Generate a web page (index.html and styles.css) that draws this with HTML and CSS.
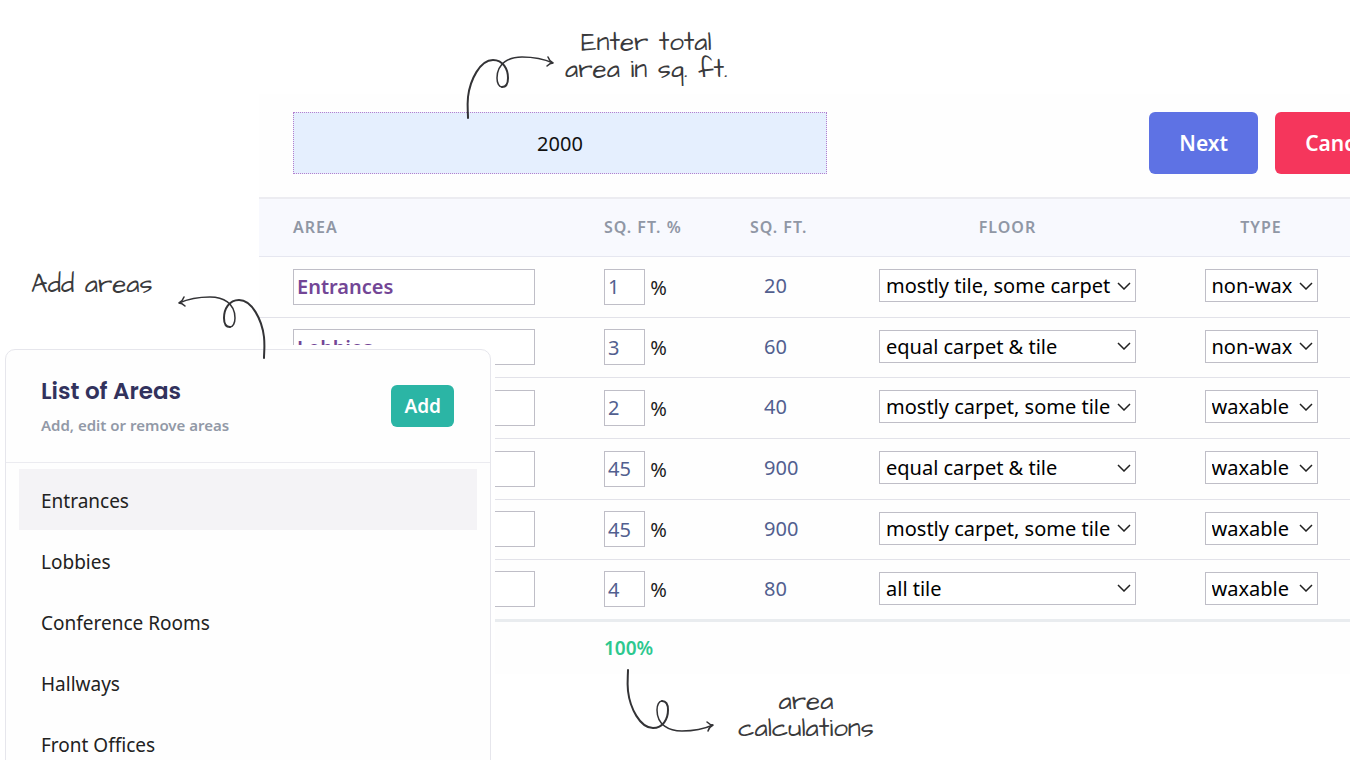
FILE: index.html
```
<!DOCTYPE html>
<html lang="en">
<head>
    <meta charset="utf-8">
    <title>Area Calculator</title>
    <link rel="stylesheet" href="styles.css">
</head>
<body>
    <svg class="defs" aria-hidden="true">
        <symbol id="loop-arrow" viewBox="0 0 100 72">
            <path stroke-width="2" d="M8 68C8 62 7 57 8 47C10 30 20 10 33 10C43 10 48 19 48 28C48 34 46 37 42 37"/>
            <path stroke-width="1.5" d="M42 37C39 37 37 33 37 28C37 13 49 7 62 7C75 7 84 9 93 13"/>
            <path stroke-width="1.5" d="M88 7C89 10 91 12 93 13C91 13 89 14 87 16"/>
        </symbol>
    </svg>

    <main class="panel">
        <form class="toolbar">
            <input class="total-area" type="text" value="2000" aria-label="Total area in sq. ft.">
            <div class="actions">
                <button type="button" class="btn btn-next">Next</button>
                <button type="button" class="btn btn-cancel">Cancel</button>
            </div>
        </form>

        <table class="area-table">
            <colgroup>
                <col class="col-area">
                <col class="col-percent">
                <col class="col-sqft">
                <col class="col-floor">
                <col>
            </colgroup>
            <thead>
                <tr>
                    <th>Area</th>
                    <th>Sq. Ft. %</th>
                    <th>Sq. Ft.</th>
                    <th class="center">Floor</th>
                    <th class="type">Type</th>
                </tr>
            </thead>
            <tbody>
                <tr>
                    <td><input class="name" type="text" value="Entrances" aria-label="Area name"></td>
                    <td><input class="percent" type="text" value="1" aria-label="Percent"> %</td>
                    <td class="sqft">20</td>
                    <td class="center"><select class="floor" aria-label="Floor"><option>mostly tile, some carpet</option></select></td>
                    <td class="type"><select class="wax" aria-label="Type"><option>non-wax</option></select></td>
                </tr>
                <tr>
                    <td><input class="name" type="text" value="Lobbies" aria-label="Area name"></td>
                    <td><input class="percent" type="text" value="3" aria-label="Percent"> %</td>
                    <td class="sqft">60</td>
                    <td class="center"><select class="floor" aria-label="Floor"><option>equal carpet &amp; tile</option></select></td>
                    <td class="type"><select class="wax" aria-label="Type"><option>non-wax</option></select></td>
                </tr>
                <tr>
                    <td><input class="name" type="text" aria-label="Area name"></td>
                    <td><input class="percent" type="text" value="2" aria-label="Percent"> %</td>
                    <td class="sqft">40</td>
                    <td class="center"><select class="floor" aria-label="Floor"><option>mostly carpet, some tile</option></select></td>
                    <td class="type"><select class="wax" aria-label="Type"><option>waxable</option></select></td>
                </tr>
                <tr>
                    <td><input class="name" type="text" aria-label="Area name"></td>
                    <td><input class="percent" type="text" value="45" aria-label="Percent"> %</td>
                    <td class="sqft">900</td>
                    <td class="center"><select class="floor" aria-label="Floor"><option>equal carpet &amp; tile</option></select></td>
                    <td class="type"><select class="wax" aria-label="Type"><option>waxable</option></select></td>
                </tr>
                <tr>
                    <td><input class="name" type="text" aria-label="Area name"></td>
                    <td><input class="percent" type="text" value="45" aria-label="Percent"> %</td>
                    <td class="sqft">900</td>
                    <td class="center"><select class="floor" aria-label="Floor"><option>mostly carpet, some tile</option></select></td>
                    <td class="type"><select class="wax" aria-label="Type"><option>waxable</option></select></td>
                </tr>
                <tr>
                    <td><input class="name" type="text" aria-label="Area name"></td>
                    <td><input class="percent" type="text" value="4" aria-label="Percent"> %</td>
                    <td class="sqft">80</td>
                    <td class="center"><select class="floor" aria-label="Floor"><option>all tile</option></select></td>
                    <td class="type"><select class="wax" aria-label="Type"><option>waxable</option></select></td>
                </tr>
            </tbody>
            <tfoot>
                <tr>
                    <td></td>
                    <td class="total">100%</td>
                    <td colspan="3"></td>
                </tr>
            </tfoot>
        </table>
    </main>

    <section class="card">
        <header class="card-header">
            <div class="card-title">
                <h2>List of Areas</h2>
                <p>Add, edit or remove areas</p>
            </div>
            <button type="button" class="btn-add">Add</button>
        </header>
        <ul class="area-list">
            <li class="active">Entrances</li>
            <li>Lobbies</li>
            <li>Conference Rooms</li>
            <li>Hallways</li>
            <li>Front Offices</li>
        </ul>
    </section>

    <p class="note note-total">Enter total<br>area in sq. ft.</p>
    <svg class="arrow arrow-total"><use href="#loop-arrow"/></svg>
    <p class="note note-add">Add areas</p>
    <svg class="arrow arrow-add"><use href="#loop-arrow"/></svg>
    <p class="note note-calc">area<br>calculations</p>
    <svg class="arrow arrow-calc"><use href="#loop-arrow"/></svg>
</body>
</html>
```
FILE: styles.css
```
* {
    box-sizing: border-box;
}

body {
    margin: 0;
    min-height: 100vh;
    position: relative;
    overflow: hidden;
    background-color: #fff;
    color: #222;
    font-family: "Noto Sans", sans-serif;
    font-size: 20px;
}

input,
select,
button {
    font-family: inherit;
    font-size: 20px;
}

.defs {
    position: absolute;
    width: 0;
    height: 0;
}

/* main panel, runs off the right edge */
.panel {
    margin: 94px -87px 0 259px;
    background-color: #fefefe;
}

.toolbar {
    display: flex;
    justify-content: space-between;
    padding: 18px 34px 23px;
}

.total-area {
    width: 534px;
    height: 62px;
    border: 1px dotted #b47fce;
    background-color: #e5effe;
    color: #111;
    text-align: center;
}

.actions {
    display: flex;
    gap: 17px;
}

.btn {
    height: 62px;
    padding: 0 30px;
    border: none;
    border-radius: 6px;
    color: #fff;
    font-size: 21px;
    font-weight: 600;
}

.btn-next {
    background-color: #5e72e4;
}

.btn-cancel {
    background-color: #f5365c;
}

.area-table {
    width: 100%;
    table-layout: fixed;
    border-collapse: collapse;
}

.col-area {
    width: 311px;
}

.col-percent {
    width: 146px;
}

.col-sqft {
    width: 130px;
}

.col-floor {
    width: 323px;
}

.area-table th {
    height: 58px;
    padding: 0 0 0 34px;
    border-top: 2px solid #ececf1;
    border-bottom: 1px solid #e6e7f0;
    background-color: #f8f9fe;
    color: #9097a5;
    font-size: 16px;
    font-weight: 600;
    letter-spacing: 1px;
    text-align: left;
    text-transform: uppercase;
}

.area-table td {
    height: 61px;
    padding: 0 0 0 34px;
    border-bottom: 1px solid #e2e2e9;
}

.area-table tbody tr:nth-child(3n+2) td {
    height: 60px;
}

.area-table tbody tr:last-child td {
    border-bottom: 3px solid #e9ecef;
}

.area-table tfoot td {
    height: 54px;
    border-bottom: none;
}

.area-table .center {
    padding: 0;
    text-align: center;
}

.area-table .type {
    padding: 0 84px 0 0;
    text-align: center;
}

.area-table td.center,
.area-table td.type,
.area-table td.sqft {
    padding-bottom: 2px;
}

.area-table .sqft {
    padding-left: 48px;
    color: #525f8f;
}

.area-table .total {
    color: #2dc88f;
    font-size: 19px;
    font-weight: 600;
}

.name,
.percent,
.floor,
.wax {
    border: 1px solid #bfbec7;
    border-radius: 0;
    background-color: #fff;
}

.name,
.percent {
    height: 36px;
    padding: 0 3px;
}

.name {
    width: 242px;
    color: #734696;
    font-weight: 600;
}

.percent {
    width: 41px;
    color: #525f8f;
}

.floor,
.wax {
    appearance: none;
    height: 33px;
    padding: 0 6px;
    background-image: url("data:image/svg+xml,%3Csvg xmlns='http://www.w3.org/2000/svg' width='14' height='8'%3E%3Cpath d='M1 1l6 6 6-6' fill='none' stroke='%23222' stroke-width='1.5'/%3E%3C/svg%3E");
    background-position: right 4px center;
    background-repeat: no-repeat;
    color: #000;
    vertical-align: middle;
}

.floor {
    width: 257px;
}

.wax {
    width: 113px;
}

/* floating list card */
.card {
    position: absolute;
    top: 349px;
    left: 5px;
    width: 486px;
    border: 1px solid #e6e6ec;
    border-radius: 10px;
    background-color: #fefefe;
    box-shadow: 0 0 0 4px #fff;
}

.card-header {
    display: flex;
    align-items: center;
    justify-content: space-between;
    height: 113px;
    padding: 0 36px 0 35px;
    border-bottom: 1px solid #ebebf0;
}

.card-title {
    padding-top: 3px;
}

.card-header h2 {
    margin: 0;
    color: #32325d;
    font-family: Poppins, Inter, sans-serif;
    font-size: 23px;
    font-weight: 600;
    line-height: 34px;
}

.card-header p {
    margin: 0;
    color: #9299a7;
    font-size: 15px;
    font-weight: 600;
    line-height: 34px;
}

.btn-add {
    height: 42px;
    padding: 0 13px;
    border: none;
    border-radius: 6px;
    background-color: #2bb5a5;
    color: #fff;
    font-size: 19px;
    font-weight: 600;
}

.area-list {
    margin: 0;
    padding: 6px 13px;
    list-style: none;
}

.area-list li {
    padding: 3px 22px 0;
    font-size: 19px;
    line-height: 58px;
}

.area-list .active {
    background-color: #f4f3f6;
}

/* handwritten notes and arrows */
.note {
    position: absolute;
    margin: 0;
    color: #3a3a3c;
    font-family: "Architects Daughter", "Open Sans", sans-serif;
    font-size: 26px;
    font-weight: 300;
    line-height: 27px;
    text-align: center;
    white-space: nowrap;
}

.note-total {
    top: 29px;
    left: 565px;
}

.note-add {
    top: 271px;
    left: 31px;
}

.note-calc {
    top: 688px;
    left: 738px;
}

.arrow {
    position: absolute;
    width: 100px;
    height: 72px;
    fill: none;
    stroke: #333336;
    stroke-linecap: round;
}

.arrow-total {
    top: 50px;
    left: 460px;
}

.arrow-add {
    top: 290px;
    left: 172px;
    transform: scaleX(-1);
}

.arrow-calc {
    top: 666px;
    left: 620px;
    transform: scaleY(-1);
}
```
